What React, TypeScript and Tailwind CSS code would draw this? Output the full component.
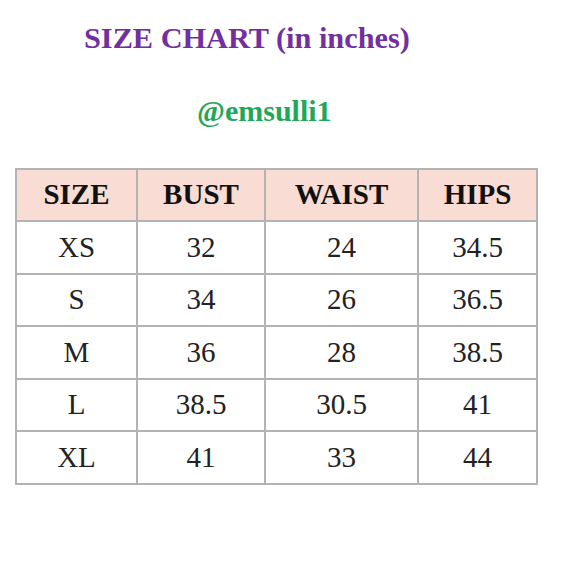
const rows = [
  ["XS", "32", "24", "34.5"],
  ["S", "34", "26", "36.5"],
  ["M", "36", "28", "38.5"],
  ["L", "38.5", "30.5", "41"],
  ["XL", "41", "33", "44"],
];

const headers = ["SIZE", "BUST", "WAIST", "HIPS"];
const widths = ["w-[121px]", "w-[128px]", "w-[153px]", "w-[119px]"];

export default function App() {
  return (
    <div className="w-[580px] h-[580px] bg-white font-['Liberation_Serif',serif]">
      <div className="pt-[20px] pl-[84px] text-[30.3px] font-bold leading-[36px] text-[#7030a0]">
        SIZE CHART (in inches)
      </div>
      <div className="pt-[37px] pl-[197px] text-[30px] font-bold leading-[36px] text-[#1fa85a]">
        @emsulli1
      </div>
      <div className="pt-[39px] pl-[15px]">
        <table className="border-collapse table-fixed text-black">
          <thead>
            <tr className="h-[52px] bg-[#f9dcd3]">
              {headers.map((h, i) => (
                <th
                  key={h}
                  className={`${widths[i]} border-2 border-[#b3b3b3] text-[29px] font-bold text-center p-0 text-[#111]`}
                >
                  {h}
                </th>
              ))}
            </tr>
          </thead>
          <tbody>
            {rows.map((r) => (
              <tr key={r[0]} className="h-[52.5px]">
                {r.map((c, i) => (
                  <td
                    key={i}
                    className="border-2 border-[#b3b3b3] text-[29px] text-center p-0 text-[#222]"
                  >
                    {c}
                  </td>
                ))}
              </tr>
            ))}
          </tbody>
        </table>
      </div>
    </div>
  );
}
